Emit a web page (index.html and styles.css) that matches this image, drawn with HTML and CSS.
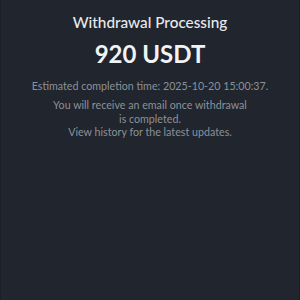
FILE: index.html
```html
<!DOCTYPE html>
<html>
<head>
<meta charset="utf-8">
<link rel="stylesheet" href="styles.css">
</head>
<body>
<main class="screen">
  <h1 class="title">Withdrawal Processing</h1>
  <div class="amount">920 USDT</div>
  <p class="eta">Estimated completion time: 2025-10-20 15:00:37.</p>
  <p class="note">You will receive an email once withdrawal<br>is completed.<br>View history for the latest updates.</p>
</main>
</body>
</html>
```
FILE: styles.css
```css
html, body {
  margin: 0;
  padding: 0;
  background: #20252e;
}
.screen {
  width: 300px;
  height: 300px;
  box-sizing: border-box;
  border-left: 1px solid #1b1f26;
  border-right: 1px solid #1b1f26;
  background: #20252e;
  display: flex;
  flex-direction: column;
  align-items: center;
  font-family: "Lato", "Noto Sans", sans-serif;
  text-align: center;
  padding-top: 12px;
}
.title {
  margin: 0;
  font-size: 15.3px;
  font-weight: 500;
  color: #e8eaed;
  line-height: 20px;
}
.amount {
  margin-top: 8px;
  font-size: 24px;
  font-weight: 700;
  color: #f2f3f5;
  line-height: 28px;
}
.eta {
  margin: 11px 0 0;
  font-size: 10.7px;
  color: #8c9198;
  line-height: 14px;
}
.note {
  margin: 5px 0 0;
  font-size: 10.7px;
  color: #8c9198;
  line-height: 13.7px;
}
```
